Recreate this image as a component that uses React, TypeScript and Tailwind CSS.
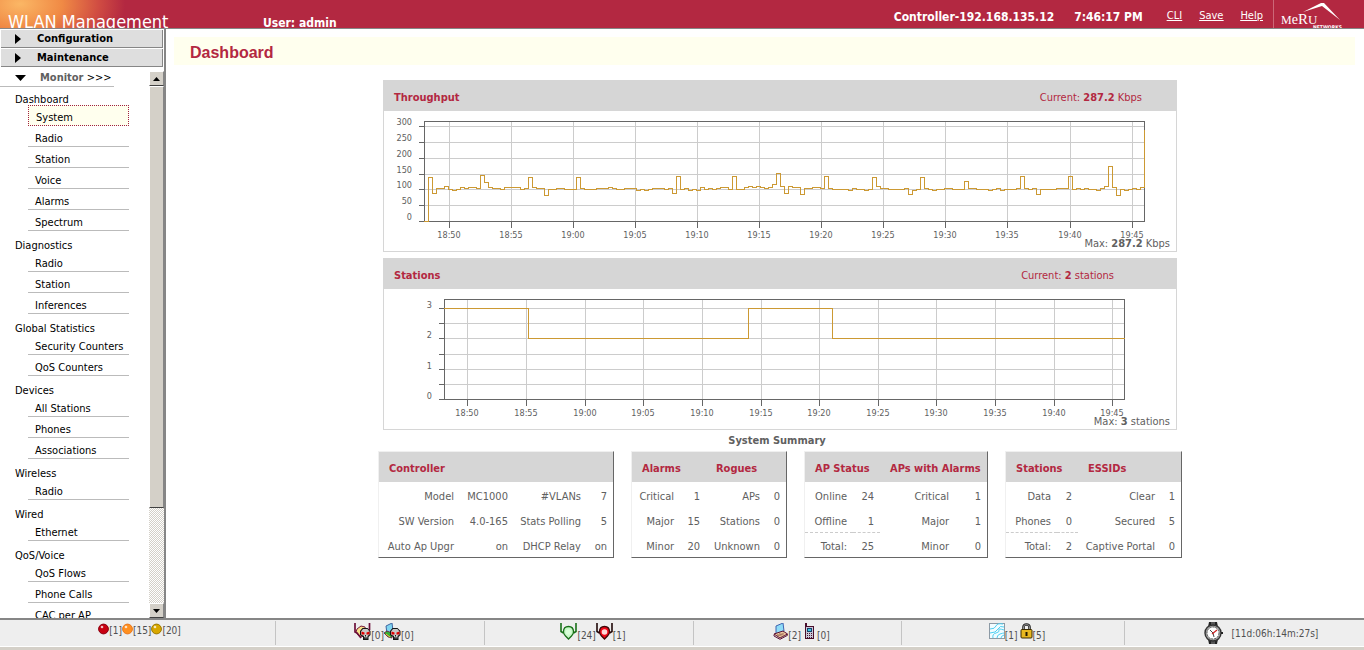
import type { ReactNode } from "react"

type Cell = [string, string]

const MENU = [
    { title: "Dashboard", items: ["System", "Radio", "Station", "Voice", "Alarms", "Spectrum"] },
    { title: "Diagnostics", items: ["Radio", "Station", "Inferences"] },
    { title: "Global Statistics", items: ["Security Counters", "QoS Counters"] },
    { title: "Devices", items: ["All Stations", "Phones", "Associations"] },
    { title: "Wireless", items: ["Radio"] },
    { title: "Wired", items: ["Ethernet"] },
    { title: "QoS/Voice", items: ["QoS Flows", "Phone Calls", "CAC per AP"] },
]

const TIMES = ["18:50", "18:55", "19:00", "19:05", "19:10", "19:15", "19:20", "19:25", "19:30", "19:35", "19:40", "19:45"]

// [sample index, kbps], the value holds until the next entry
const THROUGHPUT: [number, number][] = [
    [0, 0], [1, 139], [2, 88], [3, 104], [5, 110], [6, 101], [7, 98], [8, 101], [9, 107], [10, 104], [11, 107],
    [13, 104], [14, 145], [15, 123], [16, 107], [17, 104], [19, 101], [20, 107], [24, 101], [25, 104], [26, 139],
    [27, 107], [28, 104], [30, 82], [31, 101], [33, 104], [35, 101], [38, 139], [39, 104], [40, 101], [43, 104],
    [46, 107], [47, 104], [48, 101], [50, 104], [53, 98], [54, 101], [55, 98], [56, 101], [57, 104], [60, 101],
    [61, 104], [62, 88], [63, 142], [64, 101], [65, 104], [66, 98], [67, 101], [68, 98], [69, 107], [70, 101],
    [71, 104], [72, 101], [73, 104], [74, 107], [76, 101], [77, 142], [78, 101], [80, 107], [81, 110], [82, 107],
    [83, 110], [84, 107], [85, 104], [86, 107], [87, 117], [88, 152], [89, 110], [90, 88], [91, 110], [92, 107],
    [94, 85], [95, 104], [97, 107], [99, 104], [100, 142], [101, 104], [102, 101], [106, 98], [107, 104], [108, 101],
    [110, 98], [111, 101], [112, 139], [113, 110], [114, 104], [116, 101], [120, 104], [121, 85], [122, 98],
    [123, 101], [124, 139], [125, 104], [126, 101], [127, 98], [128, 101], [130, 104], [132, 101], [135, 126],
    [136, 104], [138, 101], [141, 98], [142, 101], [143, 104], [144, 98], [145, 101], [148, 104], [149, 142],
    [150, 104], [151, 101], [152, 104], [153, 85], [154, 101], [158, 104], [161, 142], [162, 101], [163, 104],
    [164, 101], [165, 104], [166, 101], [168, 98], [169, 104], [170, 110], [171, 174], [172, 107], [173, 82],
    [174, 101], [175, 98], [176, 101], [177, 104], [178, 101], [179, 107], [180, 287],
]

const STATIONS: [number, number][] = [[0, 3], [84, 2], [304, 3], [388, 2], [680, 2]]

function stepPath(points: [number, number][], x: (i: number) => number, y: (v: number) => number) {
    return points.map(([i, v], n) => (n === 0 ? `M${x(i)} ${y(v)}` : `H${x(i)}V${y(v)}`)).join("")
}

interface ChartProps {
    label: string
    left: number
    right: number
    rows: number[]
    yLabels: { text: string; y: number }[]
    columns: number[]
    path: string
}

function Chart({ label, left, right, rows, yLabels, columns, path }: ChartProps) {
    return (
        <svg viewBox="0 0 792 140" className="block h-[140px] w-full" role="img" aria-label={label} fill="none">
            <g shapeRendering="crispEdges">
                {rows.map((y) => (
                    <path key={y} d={`M${left} ${y + 0.5}H${right}`} stroke="#cccccc" />
                ))}
                {columns.map((x) => (
                    <path key={x} d={`M${x + 0.5} 10V110`} stroke="#cccccc" />
                ))}
                {[...rows, 110].map((y) => (
                    <path key={y} d={`M${left - 5} ${y + 0.5}H${left}`} stroke="#666666" />
                ))}
                {columns.map((x) => (
                    <path key={x} d={`M${x + 0.5} 111V117`} stroke="#666666" />
                ))}
                <rect x={left + 0.5} y="10.5" width={right - left} height="100" stroke="#666666" />
                <path d={path} stroke="#cc9933" strokeLinecap="square" />
            </g>
            <g fill="#606060" fontSize="9">
                {yLabels.map((l) => (
                    <text key={l.text} x={left - 12} y={l.y + 3} textAnchor="end">{l.text}</text>
                ))}
                {columns.map((x, i) => (
                    <text key={x} x={x} y="127" textAnchor="middle">{TIMES[i]}</text>
                ))}
            </g>
        </svg>
    )
}

function ChartPanel({ title, current, max, children }: { title: string; current: ReactNode; max: ReactNode; children: ReactNode }) {
    return (
        <section className="relative w-[794px] border border-t-0 border-[#d6d6d6] bg-white">
            <div className="flex h-[31px] items-center justify-between bg-[#d6d6d6] pl-[10px] pt-[5px] text-[11px] text-[#b32841]">
                <h2 className="font-bold">{title}</h2>
                {current}
            </div>
            {children}
            <p className="absolute bottom-0 right-[6px] text-[11px] leading-[14px] text-[#606060]">{max}</p>
        </section>
    )
}

interface SummaryProps {
    heads: string[]
    widths: number[]
    left: Cell[]
    right: Cell[]
    total?: boolean
}

function SummaryTable({ heads, widths, left, right, total }: SummaryProps) {
    const width = widths.reduce((a, b) => a + b, 2)
    return (
        <table
            className="table-fixed border-separate border-spacing-0 border border-b-[#666666] border-l-[#f0f0f0] border-r-[#666666] border-t-[#f0f0f0] text-[11px] leading-4 text-[#606060]"
            style={{ width }}
        >
            <colgroup>
                {widths.map((w, i) => (
                    <col key={i} style={{ width: w }} />
                ))}
            </colgroup>
            <thead>
                <tr className="h-[30px] bg-[#d6d6d6] text-left text-[#b32841]">
                    {heads.map((h) => (
                        <th key={h} colSpan={4 / heads.length} scope="colgroup" className="whitespace-nowrap p-0 pl-[10px] pt-[4px]">{h}</th>
                    ))}
                </tr>
            </thead>
            <tbody>
                {left.map((cell, i) => {
                    const dashed = total && i === 2 ? "border-t border-dashed border-[#cccccc]" : ""
                    return (
                        <tr key={cell[0]} className="h-[25px] text-right">
                            <td className={`whitespace-nowrap p-0 pr-[6px] pt-[4px] ${dashed}`}>{cell[0]}</td>
                            <td className={`whitespace-nowrap p-0 pr-[6px] pt-[4px] ${dashed}`}>{cell[1]}</td>
                            <td className="whitespace-nowrap p-0 pr-[6px] pt-[4px]">{right[i][0]}</td>
                            <td className="whitespace-nowrap p-0 pr-[6px] pt-[4px]">{right[i][1]}</td>
                        </tr>
                    )
                })}
            </tbody>
        </table>
    )
}

function Ball({ color, edge }: { color: string; edge: string }) {
    return (
        <svg width="11" height="12" viewBox="0 0 11 12" className="mb-[3px]">
            <circle cx="5.5" cy="6" r="4.9" fill={color} stroke={edge} />
            <circle cx="4" cy="4" r="1.3" fill="#fff" fillOpacity="0.75" />
        </svg>
    )
}

function Skull() {
    return (
        <g>
            <path d="M8.500 5h5l3 3v4l-2 2v3H9v-3l-3-2V8z" fill="#151515" />
            <path d="M9 6h4.500L15.500 8.500v3l-2 1.500v2.500H10V13l-3-1.500v-3z" fill="#c9c9c9" />
            <path d="M7.500 8.500l3 1v2h-3zM15.500 8.500l-3 1v2h3z" fill="#e00000" />
            <path d="M11 12h1v1.500h-1z" fill="#151515" />
            <path d="M10.500 14v2M11.800 14v2M13 14v2" stroke="#151515" strokeWidth="0.7" />
        </g>
    )
}

function RogueApIcon() {
    return (
        <svg width="17" height="17" viewBox="0 0 17 17" className="mb-[3px]">
            <path d="M3 6l4-3 4 1 1 5-4 5-4-2-2-3z" fill="#f6e08a" stroke="#7a1a3a" />
            <path d="M1 0v9l2 1 4 5M15.500 0v7" stroke="#6b0f3a" fill="none" strokeWidth="1.7" />
            <Skull />
        </svg>
    )
}

function RogueStationIcon() {
    return (
        <svg width="17" height="17" viewBox="0 0 17 17" className="mb-[3px]">
            <path d="M2 3l6-3 1 8-6 3z" fill="#7fd4f0" stroke="#3f64a0" />
            <path d="M0 10l3-2 5 2v5l-4-1z" fill="#35b035" stroke="#6b0f3a" strokeWidth="0.8" />
            <path d="M2 11l4 3" stroke="#f0c040" />
            <Skull />
        </svg>
    )
}

function ApIcon({ stroke, arm, fill, core }: { stroke: string; arm: string; fill: string; core: string }) {
    return (
        <svg width="17" height="17" viewBox="0 0 17 17" className="mb-[3px]">
            <path d="M1 0v8.500l2.500 1.500M16 0v8.500L13.500 10" fill="none" stroke={arm} strokeWidth="1.6" />
            <path d="M8.500 3.500q5 0 5 5.500 0 2-2 4l-3 3-3-3q-2-2-2-4 0-5.500 5-5.500z" fill={fill} stroke={stroke} strokeWidth="1.3" />
            <circle cx="8.500" cy="9" r="2.800" fill={core} />
        </svg>
    )
}

function LaptopIcon() {
    return (
        <svg width="15" height="17" viewBox="0 0 15 17" className="mb-[3px]">
            <path d="M3 3l7-3 1 8-8 3z" fill="#8fdcf8" stroke="#3f64b0" />
            <path d="M1 11l9-3 4.500 3-7.500 4z" fill="#f0c8a0" stroke="#5a1030" />
            <path d="M1 11.500v1.500l6 3.300 7.500-4v-1" fill="none" stroke="#5a1030" />
            <path d="M4 11.500l6 2M6 10.500l6 2M4 13l7-3" stroke="#8a5a4a" strokeWidth="0.6" />
        </svg>
    )
}

function PhoneIcon() {
    return (
        <svg width="10" height="17" viewBox="0 0 10 17" shapeRendering="crispEdges" className="mb-[3px]">
            <path d="M1 0h2v4H1z" fill="#4a0f2c" />
            <path d="M1 3h9v13H1z" fill="#4a0f2c" />
            <path d="M2 4h7v11H2z" fill="#c8c8d8" />
            <path d="M3 5h5v4H3z" fill="#18406a" />
            <path d="M4 6h3v2H4z" fill="#38c8e8" />
            <path d="M3 10h1v1H3zM5 10h1v1H5zM7 10h1v1H7zM3 12h1v1H3zM5 12h1v1H5zM7 12h1v1H7zM3 14h1v1H3zM5 14h1v1H5zM7 14h1v1H7z" fill="#4a0f2c" />
        </svg>
    )
}

function SignalIcon() {
    return (
        <svg width="16" height="17" viewBox="0 0 16 17" className="mb-[3px]">
            <rect x="0.5" y="0.5" width="15" height="15" fill="#f2fcff" stroke="#8c9aa5" />
            <path d="M1 6q5 0 6-3t7-2M1 10q6 0 8-4t6-2M4 15q-1-4 3-5t3-3 5 0M8 15q0-3 3-4t4-1M12 15q0-2 3-3" fill="none" stroke="#4fd0f2" />
        </svg>
    )
}

function LockIcon() {
    return (
        <svg width="13" height="16" viewBox="0 0 13 16" className="ml-[2px] mb-[4px]">
            <path d="M3.500 7V4q0-2.500 3-2.500T9.500 4v3" fill="none" stroke="#222" strokeWidth="2.6" />
            <path d="M3.500 7V4q0-2.500 3-2.500T9.500 4v3" fill="none" stroke="#aaa" strokeWidth="0.8" />
            <rect x="1" y="6.500" width="11" height="8.500" rx="1" fill="#e8b820" stroke="#3a2a00" />
            <path d="M5.500 9h2v4h-2z" fill="#221800" />
        </svg>
    )
}

function WatchIcon() {
    return (
        <svg width="20" height="22" viewBox="0 0 20 22" className="mr-[9px]">
            <path d="M6 0h8l1 5H5zM5 17h10l-1 5H6z" fill="#222" />
            <path d="M8 0h4v3H8zM8 19h4v3H8z" fill="#555" />
            <circle cx="10" cy="11" r="8" fill="#a8a8a8" stroke="#333" strokeWidth="1.4" />
            <circle cx="10" cy="11" r="6" fill="#fff" stroke="#555" strokeDasharray="2 1" />
            <path d="M10 11L7 8M10 11l1 4" stroke="#444" />
            <path d="M9 12l5-4" stroke="#d02020" strokeWidth="1.2" />
            <path d="M18 10h2v2h-2z" fill="#222" />
        </svg>
    )
}

function MeruLogo() {
    return (
        <svg width="66" height="26" viewBox="0 0 66 26" role="img" aria-label="Meru Networks" className="ml-[7px] shrink-0 self-end">
            <path d="M22 10L40 1h3l16 17-18-14z" fill="#fff" />
            <text x="0" y="22" fill="#fff" fontFamily="'Liberation Serif', serif">
                <tspan fontSize="12">M</tspan><tspan fontSize="14">e</tspan><tspan fontSize="15">R</tspan><tspan fontSize="13">U</tspan>
            </text>
            <text x="32" y="27" fill="#fff" fontSize="5" fontWeight="bold">NETWORKS</text>
        </svg>
    )
}

function Header() {
    return (
        <header className="flex h-[29px] shrink-0 items-center overflow-hidden border-b border-[#868686] bg-[#b32841] bg-[radial-gradient(ellipse_105px_60px_at_20px_4px,#fbb765_0%,#f08a45_40%,#d04c42_75%,#b32841_100%)] text-white">
            <h1 className="w-[263px] shrink-0 whitespace-nowrap pl-2 pt-[16px] text-[18px] leading-5">WLAN Management</h1>
            <p className="whitespace-nowrap pt-[18px] text-[12px] font-bold leading-4">User: admin</p>
            <div className="ml-auto flex items-center whitespace-nowrap pt-[5px] text-[12px] font-bold">
                <span className="mr-5">Controller-192.168.135.12</span>
                <span>7:46:17 PM</span>
            </div>
            <nav className="ml-6 flex gap-[17px] pt-1 text-[11px] underline">
                <a href="#cli">CLI</a>
                <a href="#save">Save</a>
                <a href="#help">Help</a>
            </nav>
            <div className="ml-[10px] flex h-full w-[91px] shrink-0 border-l border-[#cc6878]">
                <MeruLogo />
            </div>
        </header>
    )
}

function SectionButton({ children }: { children: ReactNode }) {
    return (
        <button className="mb-px ml-px flex h-[18px] w-[162px] items-center border-b border-r border-[#868686] bg-[#dedede] pl-[14px] pt-px text-[11px] font-bold leading-4 text-black">
            <svg width="6" height="10" viewBox="0 0 6 10" className="mr-4"><path d="M0 0l6 5-6 5z" /></svg>
            {children}
        </button>
    )
}

function Scrollbar() {
    const knob = "flex h-[15px] w-full items-center justify-center border border-b-[#404040] border-l-white border-r-[#868686] border-t-white bg-[#d4d0c8]"
    return (
        <div className="mt-[3px] flex w-[15px] shrink-0 flex-col bg-[repeating-conic-gradient(#d4d0c8_0_25%,#ffffff_0_50%)] bg-[length:2px_2px]">
            <button aria-label="Scroll up" className={knob}>
                <svg width="7" height="4" viewBox="0 0 7 4"><path d="M0 4l3.500-4L7 4z" /></svg>
            </button>
            <div className="flex-[420] border border-b-[#404040] border-l-white border-r-[#868686] border-t-white bg-[#d4d0c8]" />
            <div className="flex-[95]" />
            <button aria-label="Scroll down" className={knob}>
                <svg width="7" height="4" viewBox="0 0 7 4"><path d="M0 0l3.500 4L7 0z" /></svg>
            </button>
        </div>
    )
}

function Sidebar() {
    return (
        <aside className="flex w-[166px] shrink-0 flex-col border-r-2 border-[#868686] pt-px text-[11px] text-black">
            <SectionButton>Configuration</SectionButton>
            <SectionButton>Maintenance</SectionButton>
            <div className="flex min-h-0 flex-1">
                <nav className="flex-1 overflow-hidden">
                    <button className="flex h-[19px] w-[114px] items-center border-b border-[#bbbbbb] pl-[15px] pt-[2px] text-[11px]">
                        <svg width="11" height="6" viewBox="0 0 11 6" className="mr-[14px] shrink-0"><path d="M0 0h11L5.500 6z" /></svg>
                        <span className="whitespace-nowrap"><b className="text-[#606060]">Monitor</b> &gt;&gt;&gt;</span>
                    </button>
                    <div className="-mt-[2px]">
                        {MENU.map((group, g) => (
                            <div key={group.title}>
                                <h3 className="h-5 pl-[15px] pt-[6px] leading-[18px]">{group.title}</h3>
                                <ul className="ml-7 w-[101px]">
                                    {group.items.map((item, i) => (
                                        <li key={item}>
                                            <a
                                                href="#view"
                                                className={
                                                    g === 0 && i === 0
                                                        ? "block h-[21px] border border-dotted border-[#a02040] bg-[#ffffee] pl-[7px] pt-[3px] leading-[18px]"
                                                        : "block h-[21px] border-b border-[#bbbbbb] pl-[7px] pt-[4px] leading-[18px]"
                                                }
                                            >
                                                {item}
                                            </a>
                                        </li>
                                    ))}
                                </ul>
                            </div>
                        ))}
                    </div>
                </nav>
                <Scrollbar />
            </div>
        </aside>
    )
}

function StatusBar() {
    const cell = "flex justify-center border-r border-[#c4c4c4]"
    return (
        <footer className="h-8 shrink-0 border-t-2 border-[#868686] bg-[#d4d0c8] text-[10px] text-[#505050]">
            <div className="grid h-[27px] grid-cols-[276fr_209fr_209fr_208fr_223fr_239fr] border-b border-white bg-[#eeeeee] py-px">
                <div className={`${cell} items-center pb-[5px] pl-[4px]`}>
                    <Ball color="#c80010" edge="#8a0010" /><span>[1]</span>
                    <Ball color="#ff9020" edge="#e87820" /><span>[15]</span>
                    <Ball color="#d8a800" edge="#9a7800" /><span>[20]</span>
                </div>
                <div className={`${cell} items-end pb-[2px] pl-2`}>
                    <RogueApIcon /><span>[0]</span>
                    <RogueStationIcon /><span>[0]</span>
                </div>
                <div className={`${cell} items-end pb-[2px] pl-2`}>
                    <ApIcon stroke="#187018" arm="#187018" fill="#c8f8c8" core="#d8ffd8" /><span>[24]</span>
                    <ApIcon stroke="#400808" arm="#200808" fill="#f00818" core="#ffd8d8" /><span>[1]</span>
                </div>
                <div className={`${cell} items-end pb-[2px] pl-2`}>
                    <LaptopIcon /><span className="mr-[3px]">[2]</span>
                    <PhoneIcon /><span className="ml-[3px]">[0]</span>
                </div>
                <div className={`${cell} items-end pb-[2px] pl-2`}>
                    <SignalIcon /><span>[1]</span>
                    <LockIcon /><span>[5]</span>
                </div>
                <div className="flex items-center justify-center pl-8"><WatchIcon /><span>[11d:06h:14m:27s]</span></div>
            </div>
        </footer>
    )
}

export default function App() {
    return (
        <div className="flex h-screen flex-col overflow-hidden bg-white font-['DejaVu_Sans_Condensed','DejaVu_Sans',sans-serif]">
            <Header />
            <div className="flex min-h-0 flex-1">
                <Sidebar />
                <main className="min-w-0 flex-1 overflow-hidden pl-2 pr-[9px] pt-2">
                    <div className="flex h-7 items-center bg-[#ffffee] pl-4 pt-[3px]">
                        <h1 className="font-['Liberation_Sans',Arial,sans-serif] text-[16px] font-bold text-[#b32841]">Dashboard</h1>
                    </div>
                    <div className="flex flex-col items-center gap-[6px] pl-[31px] pt-[15px]">
                        <ChartPanel
                            title="Throughput"
                            current={<p className="pr-[34px]">Current: <b>287.2</b> Kbps</p>}
                            max={<>Max: <b>287.2</b> Kbps</>}
                        >
                            <Chart
                                label="Throughput"
                                left={40}
                                right={760}
                                rows={[15, 31, 47, 63, 78, 94]}
                                yLabels={[300, 250, 200, 150, 100, 50, 0].map((v, i) => ({ text: `${v}`, y: [11, 27, 43, 59, 74, 90, 106][i] }))}
                                columns={[65, 127, 189, 251, 313, 375, 437, 499, 561, 623, 686, 748]}
                                path={stepPath(THROUGHPUT, (i) => 40.5 + i * 4, (v) => 110.5 - Math.round((v * 95) / 300))}
                            />
                        </ChartPanel>
                        <ChartPanel
                            title="Stations"
                            current={<p className="pr-[62px]">Current: <b>2</b> stations</p>}
                            max={<>Max: <b>3</b> stations</>}
                        >
                            <Chart
                                label="Stations"
                                left={60}
                                right={740}
                                rows={[19, 34, 49, 65, 80, 95]}
                                yLabels={[3, 2, 1, 0].map((v, i) => ({ text: `${v}`, y: [16, 46, 77, 107][i] }))}
                                columns={[83, 142, 201, 259, 318, 377, 435, 494, 552, 611, 670, 728]}
                                path={stepPath(STATIONS, (i) => 60.5 + i, (v) => 109.5 - v * 30)}
                            />
                        </ChartPanel>
                        <section className="-mt-[3px]">
                            <h2 className="pb-[2px] pr-[6px] text-center text-[11px] font-bold leading-4 text-[#606060]">System Summary</h2>
                            <div className="flex gap-[17px]">
                                <SummaryTable
                                    heads={["Controller"]}
                                    widths={[81, 54, 73, 26]}
                                    left={[["Model", "MC1000"], ["SW Version", "4.0-165"], ["Auto Ap Upgr", "on"]]}
                                    right={[["#VLANs", "7"], ["Stats Polling", "5"], ["DHCP Relay", "on"]]}
                                />
                                <SummaryTable
                                    heads={["Alarms", "Rogues"]}
                                    widths={[48, 26, 60, 20]}
                                    left={[["Critical", "1"], ["Major", "15"], ["Minor", "20"]]}
                                    right={[["APs", "0"], ["Stations", "0"], ["Unknown", "0"]]}
                                />
                                <SummaryTable
                                    heads={["AP Status", "APs with Alarms"]}
                                    widths={[48, 27, 75, 32]}
                                    left={[["Online", "24"], ["Offline", "1"], ["Total:", "25"]]}
                                    right={[["Critical", "1"], ["Major", "1"], ["Minor", "0"]]}
                                    total
                                />
                                <SummaryTable
                                    heads={["Stations", "ESSIDs"]}
                                    widths={[51, 21, 83, 20]}
                                    left={[["Data", "2"], ["Phones", "0"], ["Total:", "2"]]}
                                    right={[["Clear", "1"], ["Secured", "5"], ["Captive Portal", "0"]]}
                                    total
                                />
                            </div>
                        </section>
                    </div>
                </main>
            </div>
            <StatusBar />
        </div>
    )
}
